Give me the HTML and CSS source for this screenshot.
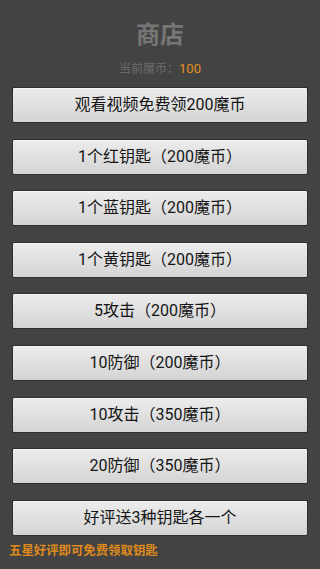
FILE: index.html
```html
<!DOCTYPE html>
<html lang="zh-CN">
<head>
<meta charset="utf-8">
<meta name="viewport" content="width=device-width, initial-scale=1">
<title>商店</title>
<link rel="stylesheet" href="styles.css">
</head>
<body>
<div class="page">
  <h1 class="title">商店</h1>
  <div class="coins">当前魔币：<span class="coins-value">100</span></div>
  <div class="list">
    <button class="btn">观看视频免费领200魔币</button>
    <button class="btn">1个红钥匙（200魔币）</button>
    <button class="btn">1个蓝钥匙（200魔币）</button>
    <button class="btn">1个黄钥匙（200魔币）</button>
    <button class="btn">5攻击（200魔币）</button>
    <button class="btn">10防御（200魔币）</button>
    <button class="btn">10攻击（350魔币）</button>
    <button class="btn">20防御（350魔币）</button>
    <button class="btn">好评送3种钥匙各一个</button>
  </div>
  <div class="note">五星好评即可免费领取钥匙</div>
</div>
</body>
</html>
```
FILE: styles.css
```css
html, body {
  margin: 0;
  padding: 0;
  background: #434343;
  height: 100%;
}
.page {
  display: flex;
  flex-direction: column;
  font-family: Roboto, "Noto Sans CJK SC", sans-serif;
  padding-top: 20px;
}
.title {
  margin: 0;
  text-align: center;
  font-size: 24px;
  line-height: 30px;
  font-weight: bold;
  color: #767676;
}
.coins {
  margin-top: 11px;
  text-align: center;
  font-size: 12px;
  line-height: 16px;
  color: #6c6c6c;
}
.coins-value {
  color: #e4901e;
  font-size: 13px;
}
.list {
  margin-top: 10px;
  display: flex;
  flex-direction: column;
  gap: 15.6px;
  padding: 0 12px 0 12px;
}
.btn {
  height: 36px;
  margin: 0;
  padding: 0;
  border: 1px solid #2f2f2f;
  border-radius: 2px;
  background: linear-gradient(#ececec, #d4d4d4);
  box-shadow: inset 0 1px 0 #f6f6f6;
  font-family: Roboto, "Noto Sans CJK SC", sans-serif;
  font-size: 16px;
  color: #151515;
  text-align: center;
  line-height: 34px;
  width: 296px;
}
.note {
  margin-top: 7px;
  padding-left: 9px;
  font-size: 12.4px;
  line-height: 16px;
  font-weight: bold;
  color: #df8a1c;
}
```
